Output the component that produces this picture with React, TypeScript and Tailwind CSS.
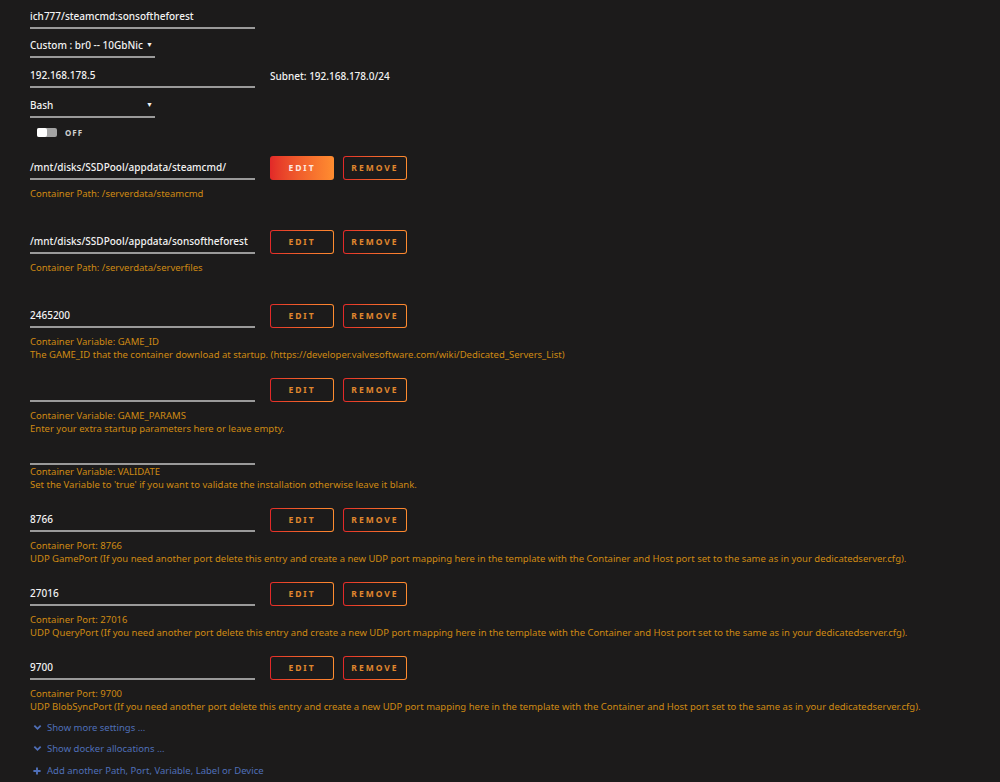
import React from "react";

type Entry = {
  value: string;
  lines: string[];
  active?: boolean;
  noButtons?: boolean;
};

const entries: Entry[] = [
  { value: "/mnt/disks/SSDPool/appdata/steamcmd/", lines: ["Container Path: /serverdata/steamcmd", ""], active: true },
  { value: "/mnt/disks/SSDPool/appdata/sonsoftheforest", lines: ["Container Path: /serverdata/serverfiles", ""] },
  {
    value: "2465200",
    lines: [
      "Container Variable: GAME_ID",
      "The GAME_ID that the container download at startup. (https://developer.valvesoftware.com/wiki/Dedicated_Servers_List)",
    ],
  },
  {
    value: "",
    lines: ["Container Variable: GAME_PARAMS", "Enter your extra startup parameters here or leave empty."],
  },
  {
    value: "",
    noButtons: true,
    lines: [
      "Container Variable: VALIDATE",
      "Set the Variable to 'true' if you want to validate the installation otherwise leave it blank.",
    ],
  },
  {
    value: "8766",
    lines: [
      "Container Port: 8766",
      "UDP GamePort (If you need another port delete this entry and create a new UDP port mapping here in the template with the Container and Host port set to the same as in your dedicatedserver.cfg).",
    ],
  },
  {
    value: "27016",
    lines: [
      "Container Port: 27016",
      "UDP QueryPort (If you need another port delete this entry and create a new UDP port mapping here in the template with the Container and Host port set to the same as in your dedicatedserver.cfg).",
    ],
  },
  {
    value: "9700",
    lines: [
      "Container Port: 9700",
      "UDP BlobSyncPort (If you need another port delete this entry and create a new UDP port mapping here in the template with the Container and Host port set to the same as in your dedicatedserver.cfg).",
    ],
  },
];

function OutlineButton({ label }: { label: string }) {
  return (
    <div className="w-16 h-6 rounded-[3px] p-px bg-gradient-to-r from-[#e22828] to-[#ff8d30]">
      <div className="w-full h-full rounded-[2px] bg-[#1c1b1b] flex items-center justify-center text-[8.5px] font-bold tracking-[2px] text-[#e0872e]">
        {label}
      </div>
    </div>
  );
}

function FilledButton({ label }: { label: string }) {
  return (
    <div className="w-16 h-6 rounded-[3px] bg-gradient-to-r from-[#e22828] to-[#ff8d30] flex items-center justify-center text-[8.5px] font-bold tracking-[2px] text-[#ffe8e0]">
      {label}
    </div>
  );
}

function Field({ children, width = "w-[225px]" }: { children?: React.ReactNode; width?: string }) {
  return (
    <div className={`${width} h-6 border-b-2 border-[#9a9a9a] flex items-center whitespace-nowrap text-[10px] font-medium text-[#f2f2f2]`}>
      {children}
    </div>
  );
}

function Desc({ lines }: { lines: string[] }) {
  return (
    <div className="h-[26px] text-[9.5px] leading-[13px] text-[#cf8a13]">
      {lines.map((l, i) => (
        <div key={i} className="whitespace-nowrap h-[13px]">{l}</div>
      ))}
    </div>
  );
}

function ConfigRow({ entry }: { entry: Entry }) {
  if (entry.noButtons) {
    return (
      <div className="mb-[17px]">
        <div className="w-[225px] h-[13px] border-b-2 border-[#9a9a9a]" />
        <Desc lines={entry.lines} />
      </div>
    );
  }
  return (
    <div className="mb-[17px]">
      <div className="flex items-center">
        <Field>{entry.value}</Field>
        <div className="ml-[15px] flex gap-[9px]">
          {entry.active ? <FilledButton label="EDIT" /> : <OutlineButton label="EDIT" />}
          <OutlineButton label="REMOVE" />
        </div>
      </div>
      <div className="mt-[7px]">
        <Desc lines={entry.lines} />
      </div>
    </div>
  );
}

function Chevron() {
  return (
    <svg width="9" height="9" viewBox="0 0 10 10" className="shrink-0">
      <path d="M1.5 3 L5 6.5 L8.5 3" fill="none" stroke="currentColor" strokeWidth="2" />
    </svg>
  );
}

function Plus() {
  return (
    <svg width="8" height="8" viewBox="0 0 10 10" className="shrink-0">
      <path d="M5 0.5 V9.5 M0.5 5 H9.5" fill="none" stroke="currentColor" strokeWidth="2.4" />
    </svg>
  );
}

export default function App() {
  return (
    <div className="min-h-screen bg-[#1c1b1b] pl-[30px] pt-[5px] font-['Noto_Sans',sans-serif] overflow-hidden">
      {/* repository */}
      <Field>ich777/steamcmd:sonsoftheforest</Field>

      {/* network */}
      <div className="mt-[5px]">
        <Field width="w-[125px]">
          <span className="flex-1">Custom : br0 -- 10GbNic</span>
          <span className="text-[7px] mr-[2px]">▼</span>
        </Field>
      </div>

      {/* fixed ip */}
      <div className="mt-[6px] flex items-center">
        <Field>192.168.178.5</Field>
        <div className="ml-[15px] text-[10px] font-medium text-[#f2f2f2]">Subnet: 192.168.178.0/24</div>
      </div>

      {/* console shell */}
      <div className="mt-[6px]">
        <Field width="w-[125px]">
          <span className="flex-1">Bash</span>
          <span className="text-[7px] mr-[2px]">▼</span>
        </Field>
      </div>

      {/* privileged */}
      <div className="mt-[10px] ml-[7px] flex items-center h-[9px]">
        <div className="w-5 h-[9px] rounded-[2px] bg-[#a3a3a3] flex">
          <div className="w-[10px] h-[9px] rounded-[2px] bg-white" />
        </div>
        <span className="ml-2 text-[8px] font-bold tracking-[1px] text-[#d0d0d0]">OFF</span>
      </div>

      <div className="mt-[19px]">
        {entries.map((e, i) => (
          <ConfigRow key={i} entry={e} />
        ))}
      </div>

      <div className="-mt-[13px] text-[9.5px] text-[#4f6fb8] leading-[21px]">
        <div className="flex items-center gap-[5px] ml-[3px]">
          <Chevron />
          <span>Show more settings ...</span>
        </div>
        <div className="flex items-center gap-[5px] ml-[3px]">
          <Chevron />
          <span>Show docker allocations ...</span>
        </div>
        <div className="flex items-center gap-[6px] ml-[3px] mt-px">
          <Plus />
          <span>Add another Path, Port, Variable, Label or Device</span>
        </div>
      </div>
    </div>
  );
}
